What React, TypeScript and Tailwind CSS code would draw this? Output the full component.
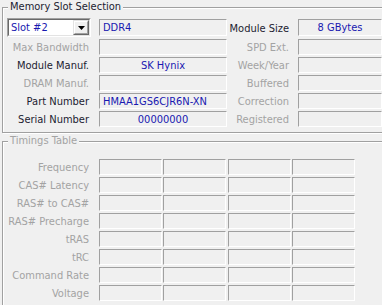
import React from "react";

const dark = "text-[#1c1c30]";
const gray = "text-[#a3a3a3]";
const blue = "text-[#1818b0]";

function Field({ w, h, children, align = "left" }: { w: string; h: string; children?: React.ReactNode; align?: "left" | "center" }) {
  return (
    <div
      className={`${w} ${h} border-t border-l border-[#a0a0a0] border-b-white border-r-white border-b border-r flex items-center pt-[1px] ${
        align === "center" ? "justify-center" : "justify-start pl-[3px]"
      } ${blue} whitespace-nowrap overflow-hidden`}
    >
      {children}
    </div>
  );
}

function Label({ children, enabled, w, pr }: { children: React.ReactNode; enabled?: boolean; w: string; pr: string }) {
  return (
    <div className={`${w} ${pr} pt-[2px] text-right whitespace-nowrap ${enabled ? dark : gray}`}>{children}</div>
  );
}

function Combo() {
  return (
    <div className="w-[84px] h-[19px] bg-white border-t border-l border-[#a0a0a0] border-b-white border-r-white border-b border-r">
      <div className="w-full h-full border-t border-l border-[#696969] border-b-[#e3e3e3] border-r-[#e3e3e3] border-b border-r flex items-center">
        <span className={`flex-1 pl-[2px] pt-[1px] ${blue}`}>Slot #2</span>
        <div className="w-[16px] h-full bg-[#f0f0f0] border-t border-l border-[#e3e3e3] border-b-[#696969] border-r-[#696969] border-b border-r">
          <div className="w-full h-full border-t border-l border-white border-b-[#a0a0a0] border-r-[#a0a0a0] border-b border-r flex items-center justify-center">
            <svg width="7" height="4" viewBox="0 0 7 4">
              <path d="M0 0h7L3.5 4z" fill="#000" />
            </svg>
          </div>
        </div>
      </div>
    </div>
  );
}

function Group({ title, enabled, h, className, children }: { title: string; enabled?: boolean; h: string; className?: string; children: React.ReactNode }) {
  return (
    <div
      className={`relative w-[420px] ${h} border border-[#a0a0a0] shadow-[inset_1px_1px_0_#ffffff,1px_1px_0_#ffffff] ${className ?? ""}`}
    >
      <span className={`absolute left-[5px] top-[-8px] px-[2px] leading-[14px] bg-[#f0f0f0] ${enabled ? dark : gray}`}>{title}</span>
      {children}
    </div>
  );
}

export default function App() {
  const timings = ["Frequency", "CAS# Latency", "RAS# to CAS#", "RAS# Precharge", "tRAS", "tRC", "Command Rate", "Voltage"];
  const rows: { l: string; le?: boolean; v?: string; va?: "left" | "center"; r: string; re?: boolean }[] = [
    { l: "Max Bandwidth", r: "SPD Ext." },
    { l: "Module Manuf.", le: true, v: "SK Hynix", va: "center", r: "Week/Year" },
    { l: "DRAM Manuf.", r: "Buffered" },
    { l: "Part Number", le: true, v: "HMAA1GS6CJR6N-XN", va: "left", r: "Correction" },
    { l: "Serial Number", le: true, v: "00000000", va: "center", r: "Registered" },
  ];
  return (
    <div
      className="w-[382px] h-[305px] bg-[#f0f0f0] overflow-hidden pt-[7px] pl-[2px] text-[11px] leading-[14px]"
      style={{ fontFamily: '"DejaVu Sans Condensed", "DejaVu Sans", sans-serif' }}
    >
      <Group title="Memory Slot Selection" enabled h="h-[126px]">
        <div className="pl-[4px] pt-[10px] flex flex-col gap-[2px]">
          <div className="flex items-center h-[19px]">
            <Combo />
            <div className="ml-[8px]">
              <Field w="w-[128px]" h="h-[17px]">DDR4</Field>
            </div>
            <Label enabled w="w-[71px]" pr="pr-[9px]">Module Size</Label>
            <Field w="w-[84px]" h="h-[17px]" align="center">8 GBytes</Field>
          </div>
          {rows.map((r) => (
            <div key={r.l} className="flex items-center h-[16px]">
              <Label enabled={r.le} w="w-[84px]" pr="pr-[2px]">{r.l}</Label>
              <div className="ml-[8px]">
                <Field w="w-[128px]" h="h-[16px]" align={r.va}>{r.v}</Field>
              </div>
              <Label enabled={r.re} w="w-[71px]" pr="pr-[9px]">{r.r}</Label>
              <Field w="w-[84px]" h="h-[16px]" />
            </div>
          ))}
        </div>
      </Group>
      <Group title="Timings Table" h="h-[200px]" className="mt-[8px]">
        <div className="pl-[4px] pt-[17px] flex flex-col gap-[2px]">
          {timings.map((t) => (
            <div key={t} className="flex items-center h-[16px]">
              <Label w="w-[84px]" pr="pr-[2px]">{t}</Label>
              <div className="ml-[8px] flex">
                <Field w="w-[63px]" h="h-[16px]" />
                <div className="ml-[1px]"><Field w="w-[63px]" h="h-[16px]" /></div>
                <div className="ml-[2px]"><Field w="w-[63px]" h="h-[16px]" /></div>
                <div className="ml-[1px]"><Field w="w-[63px]" h="h-[16px]" /></div>
              </div>
            </div>
          ))}
        </div>
      </Group>
    </div>
  );
}
